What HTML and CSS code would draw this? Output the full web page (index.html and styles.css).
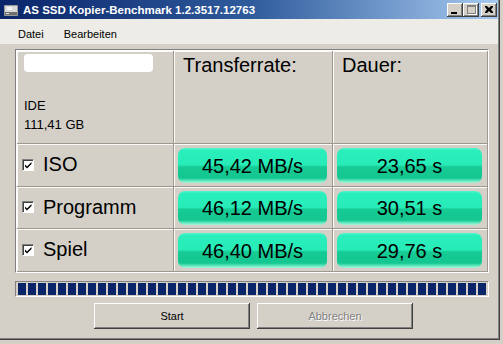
FILE: index.html
```html
<!DOCTYPE html>
<html lang="de">
<head>
<meta charset="utf-8">
<title>AS SSD Kopier-Benchmark</title>
<link rel="stylesheet" href="styles.css">
</head>
<body>
<div class="window">
  <div class="titlebar">
    <svg class="app-icon" width="16" height="16" viewBox="0 0 16 16">
      <rect x="1" y="3" width="14" height="11" rx="1" fill="#9a9a9a"/>
      <rect x="2" y="4" width="12" height="6" fill="#d8d8d8"/>
      <rect x="2" y="10" width="12" height="3" fill="#6e6e6e"/>
      <rect x="3" y="11" width="3" height="1" fill="#e0e0e0"/>
      <rect x="4" y="5" width="5" height="3" fill="#f4f4f4"/>
    </svg>
    <span class="title">AS SSD Kopier-Benchmark 1.2.3517.12763</span>
    <div class="caption-buttons">
      <div class="cbtn"><span class="g-min"></span></div>
      <div class="cbtn"><span class="g-max"></span></div>
      <div class="cbtn close">
        <svg width="8" height="7" viewBox="0 0 8 7"><path d="M0 0h2l2 2 2-2h2v1l-2 2.5 2 2.5v1h-2l-2-2-2 2h-2v-1l2-2.5-2-2.5z" fill="#000"/></svg>
      </div>
    </div>
  </div>
  <div class="menubar">
    <span class="menu-item">Datei</span>
    <span class="menu-item">Bearbeiten</span>
  </div>
  <div class="content">
    <div class="grid">
      <div class="cell drive">
        <div class="redacted"></div>
        <div class="drive-type">IDE</div>
        <div class="drive-size">111,41 GB</div>
      </div>
      <div class="cell head">Transferrate:</div>
      <div class="cell head">Dauer:</div>

      <div class="cell label"><span class="check"><svg width="9" height="9" viewBox="0 0 9 9"><path d="M1 3.5l2 2 4.5-4.5v2L3 7.5 1 5.5z" fill="#000"/></svg></span>ISO</div>
      <div class="cell val"><div class="pill">45,42 MB/s</div></div>
      <div class="cell val"><div class="pill">23,65 s</div></div>

      <div class="cell label"><span class="check"><svg width="9" height="9" viewBox="0 0 9 9"><path d="M1 3.5l2 2 4.5-4.5v2L3 7.5 1 5.5z" fill="#000"/></svg></span>Programm</div>
      <div class="cell val"><div class="pill">46,12 MB/s</div></div>
      <div class="cell val"><div class="pill">30,51 s</div></div>

      <div class="cell label"><span class="check"><svg width="9" height="9" viewBox="0 0 9 9"><path d="M1 3.5l2 2 4.5-4.5v2L3 7.5 1 5.5z" fill="#000"/></svg></span>Spiel</div>
      <div class="cell val"><div class="pill">46,40 MB/s</div></div>
      <div class="cell val"><div class="pill">29,76 s</div></div>
    </div>
    <div class="progress">
      <span></span><span></span><span></span><span></span><span></span><span></span><span></span><span></span><span></span><span></span>
      <span></span><span></span><span></span><span></span><span></span><span></span><span></span><span></span><span></span><span></span>
      <span></span><span></span><span></span><span></span><span></span><span></span><span></span><span></span><span></span><span></span>
      <span></span><span></span><span></span><span></span><span></span><span></span><span></span><span></span><span></span><span></span>
      <span></span><span></span><span></span><span></span><span></span><span></span><span></span>
    </div>
    <div class="buttons">
      <button class="btn">Start</button>
      <button class="btn" disabled>Abbrechen</button>
    </div>
  </div>
</div>
</body>
</html>
```
FILE: styles.css
```css
html, body {
  margin: 0;
  padding: 0;
}
body {
  width: 503px;
  height: 344px;
  overflow: hidden;
  background: #d4d0c8;
  font-family: "Liberation Sans", Arial, sans-serif;
}
.window {
  width: 498px;
  height: 338px;
  background: #d4d0c8;
  border-right: 1px solid #808080;
  box-shadow: 1px 0 0 #404040, 0 1px 0 #404040, 1px 1px 0 #404040;
  border-bottom: 1px solid #808080;
  display: flex;
  flex-direction: column;
}
.titlebar {
  height: 19px;
  background: linear-gradient(to right, #0a246a 0%, #2f5b9c 50%, #a6caf0 100%);
  display: flex;
  align-items: center;
  padding-left: 3px;
  box-sizing: border-box;
}
.app-icon {
  flex: none;
}
.title {
  color: #fff;
  font-weight: bold;
  font-size: 11.5px;
  margin-left: 4px;
  white-space: nowrap;
  flex: 1;
}
.caption-buttons {
  display: flex;
  margin-right: 1px;
}
.cbtn {
  width: 16px;
  height: 14px;
  background: #d4d0c8;
  box-shadow: inset -1px -1px #404040, inset 1px 1px #fff, inset -2px -2px #808080;
  display: flex;
  align-items: center;
  justify-content: center;
}
.cbtn.close {
  margin-left: 2px;
}
.g-min {
  width: 6px;
  height: 2px;
  background: #000;
  margin-top: 6px;
  margin-left: -2px;
}
.g-max {
  width: 9px;
  height: 9px;
  border: 1px solid #808080;
  border-top-width: 2px;
  box-shadow: 1px 1px 0 #fff;
  box-sizing: border-box;
}
.menubar {
  height: 25px;
  background: #edece7;
  display: flex;
  align-items: center;
  padding-left: 8px;
  padding-top: 4px;
  box-sizing: border-box;
  font-size: 11px;
  color: #000;
}
.menu-item {
  padding: 0 10px;
}
.content {
  padding: 5px 0 0 15px;
}
.grid {
  width: 474px;
  box-sizing: border-box;
  border: 1px solid;
  border-color: #808080 #fff #fff #808080;
  box-shadow: inset 1px 1px #fff;
  padding: 1px 0 0 1px;
  display: grid;
  grid-template-columns: 157px 159px 155px;
  grid-template-rows: 93px 43px 42px 43px;
}
.cell {
  border-right: 1px solid #9c9890;
  border-bottom: 1px solid #9c9890;
  box-shadow: inset 1px 1px #fbfaf8;
  box-sizing: border-box;
  min-width: 0;
}
.drive {
  padding: 3px 0 0 7px;
  font-size: 13px;
  color: #000;
}
.redacted {
  width: 129px;
  height: 18px;
  background: #fff;
  border-radius: 4px;
  margin-bottom: 26px;
}
.drive-size {
  margin-top: 4px;
}
.head {
  font-size: 20px;
  padding: 3px 0 0 9px;
  color: #000;
}
.label {
  display: flex;
  align-items: center;
  font-size: 20px;
  padding-left: 5px;
  padding-bottom: 1px;
  color: #000;
}
.check {
  width: 12px;
  height: 12px;
  box-sizing: border-box;
  background: #fff;
  border: 1px solid;
  border-color: #808080 #fff #fff #808080;
  box-shadow: inset 1px 1px #404040;
  display: flex;
  align-items: center;
  justify-content: center;
  margin-right: 9px;
}
.check svg {
  margin: 1px 0 0 1px;
}
.val {
  padding: 4px 5px 3px 4px;
}
.pill {
  height: 100%;
  border-radius: 7px;
  background: linear-gradient(to bottom, #4ff6cc 0%, #2aeebb 8%, #28ecb8 48%, #17cb95 54%, #14c690 86%, #52e3b6 92%, #a9f6dd 100%);
  display: flex;
  align-items: center;
  justify-content: center;
  font-size: 20px;
  color: #000;
  padding-top: 1px;
  box-sizing: border-box;
}
.progress {
  margin-top: 8px;
  width: 474px;
  height: 16px;
  box-sizing: border-box;
  border: 1px solid;
  border-color: #808080 #fff #fff #808080;
  padding: 1px 0 1px 2px;
  display: flex;
  gap: 2px;
}
.progress span {
  width: 8px;
  height: 12px;
  background: #0a246a;
  flex: none;
}
.buttons {
  display: flex;
  gap: 7px;
  margin: 6px 0 0 79px;
}
.btn {
  width: 156px;
  height: 26px;
  background: #d4d0c8;
  border: none;
  box-shadow: inset -1px -1px #404040, inset 1px 1px #fff, inset -2px -2px #808080;
  font-family: "Liberation Sans", Arial, sans-serif;
  font-size: 11px;
  color: #000;
  padding: 0;
}
.btn:disabled {
  color: #808080;
  text-shadow: 1px 1px 0 #fff;
}
```
